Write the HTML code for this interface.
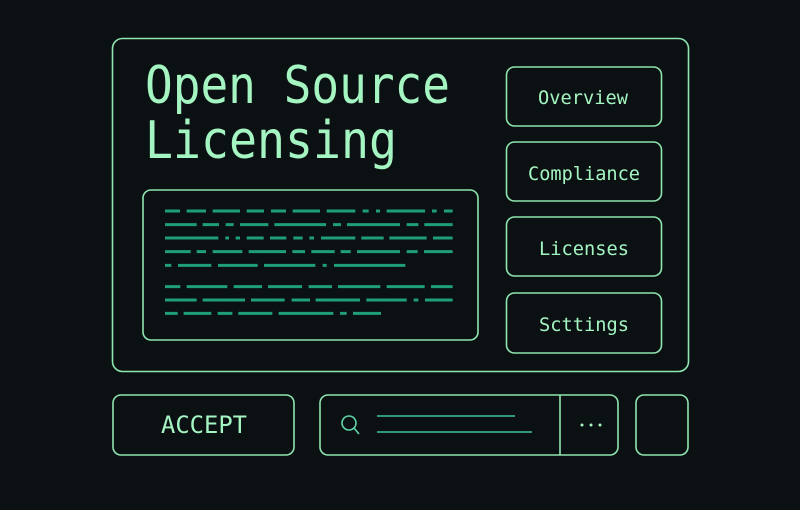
<!DOCTYPE html>
<html><head><meta charset="utf-8"><style>
html,body{margin:0;padding:0;background:#0b1013;}
svg{display:block}
</style></head><body>
<svg width="800" height="510" viewBox="0 0 800 510" xmlns="http://www.w3.org/2000/svg">
<rect width="800" height="510" fill="#0b1013"/>
<g fill="none" stroke="#8ee6b0" stroke-width="1.6">
<rect x="112.5" y="38.5" width="576" height="333" rx="10"/>
<rect x="143" y="190" width="335" height="150" rx="8"/>
<rect x="506.5" y="67" width="155" height="59" rx="8"/>
<rect x="506.5" y="142" width="155" height="59" rx="8"/>
<rect x="506.5" y="217" width="155" height="59" rx="8"/>
<rect x="506.5" y="293" width="155" height="60" rx="8"/>
<rect x="113" y="395" width="181" height="60" rx="8"/>
<rect x="320" y="395" width="298" height="60" rx="8"/>
<line x1="560" y1="395" x2="560" y2="455"/>
<rect x="636" y="395" width="52" height="60" rx="8"/>
</g>
<g fill="#a4f5c2" font-family="DejaVu Sans Mono, monospace">
<text x="145" y="103" font-size="52" textLength="305" lengthAdjust="spacingAndGlyphs">Open Source</text>
<text x="145" y="158" font-size="52" textLength="252" lengthAdjust="spacingAndGlyphs">Licensing</text>
</g>
<g fill="#a4f5c2" font-family="DejaVu Sans Mono, monospace" font-size="19">
<text x="538" y="104" textLength="90" lengthAdjust="spacingAndGlyphs">Overview</text>
<text x="528" y="180" textLength="112" lengthAdjust="spacingAndGlyphs">Compliance</text>
<text x="539" y="255" textLength="90" lengthAdjust="spacingAndGlyphs">Licenses</text>
<text x="539" y="331" textLength="90" lengthAdjust="spacingAndGlyphs">Scttings</text>
<text x="161" y="433" font-size="24" textLength="86" lengthAdjust="spacingAndGlyphs">ACCEPT</text>
</g>
<g stroke="#5fd6a8" stroke-width="1.6" fill="none">
<circle cx="349" cy="423" r="7"/>
<line x1="354" y1="428" x2="359" y2="434"/>
<line x1="377" y1="416" x2="515" y2="416" stroke="#3cc69a"/>
<line x1="377" y1="432" x2="532" y2="432" stroke="#3cc69a"/>
</g>
<g fill="#a4f5c2"><circle cx="582" cy="425" r="1.5"/><circle cx="591" cy="425" r="1.5"/><circle cx="600" cy="425" r="1.5"/></g>
<g transform="translate(140,185) scale(0.33333)" stroke="#1f9e7a" stroke-width="9" fill="none">
<path d="M75 78H120M140 78H198M218 78H300M320 78H372M393 78H438M458 78H540M560 78H646M668 78H686M708 78H720M740 78H855M876 78H890M912 78H938"/>
<path d="M75 119H170M188 119H237M257 119H281M300 119H385M403 119H558M579 119H603M621 119H780M800 119H835M853 119H938"/>
<path d="M75 159H235M256 159H267M287 159H300M320 159H371M390 159H439M460 159H488M508 159H522M543 159H646M664 159H731M748 159H860M879 159H938"/>
<path d="M75 200H152M170 200H198M218 200H307M326 200H438M457 200H495M514 200H584M602 200H632M651 200H780M800 200H833M852 200H938"/>
<path d="M75 241H94M114 241H214M234 241H353M372 241H526M548 241H560M582 241H796"/>
<path d="M75 305H121M140 305H262M281 305H366M384 305H486M506 305H576M594 305H721M740 305H854M873 305H938"/>
<path d="M75 345H170M188 345H315M333 345H434M455 345H510M527 345H660M679 345H800M821 345H835M855 345H938"/>
<path d="M75 385H113M131 385H214M233 385H277M295 385H397M416 385H580M600 385H620M639 385H723"/>
</g>
</svg>
</body></html>
